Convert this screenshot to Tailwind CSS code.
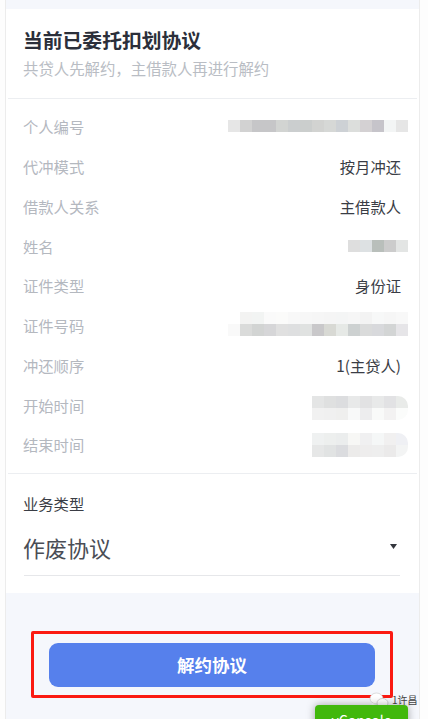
<!DOCTYPE html>
<html lang="zh-CN">
<head>
  <meta charset="UTF-8" />
  <title>当前已委托扣划协议</title>
  <meta name="viewport" content="width=device-width, initial-scale=1.0" />
  <script src="https://cdn.jsdelivr.net/npm/@tailwindcss/browser@4"></script>
</head>
<body class="bg-[#fdfdfd] font-['Noto_Sans_CJK_SC','Noto_Sans',sans-serif]">

<div class="relative h-[719px] w-[428px] overflow-hidden pl-[5px]">

  <!-- Page column -->
  <main class="h-full w-[415px] bg-[#f5f7fc] pt-[9px] border-x border-[#ececec]">

    <!-- Agreement card -->
    <section class="h-[584px] bg-white">
      <header class="mx-[2px] h-[90px] border-b border-[#eceef1] px-[15px] pt-[16px]">
        <h1 class="text-[19.8px] leading-[30px] font-bold text-[#2b2f3a]">当前已委托扣划协议</h1>
        <p class="text-[15.4px] leading-[26px] text-[#b9bdc4]">共贷人先解约，主借款人再进行解约</p>
      </header>

      <!-- Detail rows -->
      <div class="mx-[2px] h-[375px] border-b border-[#eceef1] pl-[15px] pr-[16px] pt-[8px] text-[15.3px] text-[#3a3d45]">
        <div class="flex h-[39.75px] items-center justify-between">
          <span class="text-[#b4b8bf]">个人编号</span>
          <div class="-mr-[7px] mb-[2px] flex flex-col">
            <div class="flex h-3">
              <i class="w-3 bg-[#e6e6e6]"></i><i class="w-3 bg-[#d2d2d2]"></i><i class="w-3 bg-[#c6c6c8]"></i><i class="w-3 bg-[#c6c6c8]"></i><i class="w-3 bg-[#d2d4d2]"></i><i class="w-3 bg-[#cbcecf]"></i><i class="w-3 bg-[#cbcecd]"></i><i class="w-3 bg-[#d2d3d1]"></i><i class="w-3 bg-[#d6d8d6]"></i><i class="w-3 bg-[#cdd1d5]"></i><i class="w-3 bg-[#dcdedc]"></i><i class="w-3 bg-[#d4d1d3]"></i><i class="w-3 bg-[#c6c4ca]"></i><i class="w-3 bg-[#f3f5f5]"></i><i class="w-3 bg-[#e6e6e6]"></i>
            </div>
          </div>
        </div>
        <div class="flex h-[39.75px] items-center justify-between">
          <span class="text-[#b4b8bf]">代冲模式</span><span>按月冲还</span>
        </div>
        <div class="flex h-[39.75px] items-center justify-between">
          <span class="text-[#b4b8bf]">借款人关系</span><span>主借款人</span>
        </div>
        <div class="flex h-[39.75px] items-center justify-between">
          <span class="text-[#b4b8bf]">姓名</span>
          <div class="-mr-[7px] flex h-3">
            <i class="w-3 bg-[#dedede]"></i><i class="w-3 bg-[#dde1e3]"></i><i class="w-3 bg-[#b9bfbb]"></i><i class="w-3 bg-[#cccccc]"></i><i class="w-3 bg-[#e3e5e4]"></i>
          </div>
        </div>
        <div class="flex h-[39.75px] items-center justify-between">
          <span class="text-[#b4b8bf]">证件类型</span><span>身份证</span>
        </div>
        <div class="flex h-[39.75px] items-center justify-between">
          <span class="text-[#b4b8bf]">证件号码</span>
          <div class="-mr-[7px] mb-[4px] flex flex-col items-end">
            <div class="flex h-3">
              <i class="w-3 bg-[#f3f3f2]"></i><i class="w-3 bg-[#f2f4f3]"></i><i class="w-3 bg-[#fafafa]"></i><i class="w-3 bg-[#fbfbfa]"></i><i class="w-3 bg-[#f8f8f8]"></i><i class="w-3 bg-[#f7f7f7]"></i><i class="w-3 bg-[#f6f6f6]"></i><i class="w-3 bg-[#f5f5f5]"></i><i class="w-3 bg-[#f4f5f5]"></i><i class="w-3 bg-[#f6f6f6]"></i><i class="w-3 bg-[#f3f3f3]"></i><i class="w-3 bg-[#f7f8f8]"></i><i class="w-3 bg-[#f6f6f6]"></i><i class="w-3 bg-[#f8f8f8]"></i>
            </div>
            <div class="flex h-3">
              <i class="w-3 bg-[#f9f9f9]"></i><i class="w-3 bg-[#dadbda]"></i><i class="w-3 bg-[#d2d4d3]"></i><i class="w-3 bg-[#d6d6d8]"></i><i class="w-3 bg-[#e0e0e0]"></i><i class="w-3 bg-[#dedfe0]"></i><i class="w-3 bg-[#e0e2e1]"></i><i class="w-3 bg-[#c9c8ca]"></i><i class="w-3 bg-[#d8d9d4]"></i><i class="w-3 bg-[#e6e9e6]"></i><i class="w-3 bg-[#cdd1d1]"></i><i class="w-3 bg-[#dadbdb]"></i><i class="w-3 bg-[#d8d9dc]"></i><i class="w-3 bg-[#d3d5d5]"></i><i class="w-3 bg-[#e6e5e8]"></i>
            </div>
          </div>
        </div>
        <div class="flex h-[39.75px] items-center justify-between">
          <span class="text-[#b4b8bf]">冲还顺序</span><span>1(主贷人)</span>
        </div>
        <div class="flex h-[39.75px] items-center justify-between">
          <span class="text-[#b4b8bf]">开始时间</span>
          <div class="-mr-[7px] mt-[6px] flex flex-col overflow-hidden rounded-r-[10px]">
            <div class="flex h-3">
              <i class="w-3 bg-[#e4e5e5]"></i><i class="w-3 bg-[#dfe0e0]"></i><i class="w-3 bg-[#dcdddf]"></i><i class="w-3 bg-[#e8e9e9]"></i><i class="w-3 bg-[#e2e2e3]"></i><i class="w-3 bg-[#e8e9e9]"></i><i class="w-3 bg-[#e2e2e4]"></i><i class="w-3 bg-[#e9ebe9]"></i>
            </div>
            <div class="flex h-3">
              <i class="w-3 bg-[#f1f1f1]"></i><i class="w-3 bg-[#f0f0f0]"></i><i class="w-3 bg-[#efefee]"></i><i class="w-3 bg-[#f8f9f9]"></i><i class="w-3 bg-[#ededee]"></i><i class="w-3 bg-[#f9faf9]"></i><i class="w-3 bg-[#f3f2f2]"></i><i class="w-3 bg-[#fbfcfb]"></i>
            </div>
          </div>
        </div>
        <div class="flex h-[39.75px] items-center justify-between">
          <span class="text-[#b4b8bf]">结束时间</span>
          <div class="-mr-[7px] flex flex-col overflow-hidden rounded-r-[10px]">
            <div class="flex h-3">
              <i class="w-3 bg-[#eff1f1]"></i><i class="w-3 bg-[#edefee]"></i><i class="w-3 bg-[#ebeded]"></i><i class="w-3 bg-[#f7f7f5]"></i><i class="w-3 bg-[#f0f0f1]"></i><i class="w-3 bg-[#f5f7f7]"></i><i class="w-3 bg-[#f1f0f0]"></i><i class="w-3 bg-[#eff0f4]"></i>
            </div>
            <div class="flex h-3">
              <i class="w-3 bg-[#e6e7e7]"></i><i class="w-3 bg-[#e1e3e3]"></i><i class="w-3 bg-[#dbdcdf]"></i><i class="w-3 bg-[#ecebea]"></i><i class="w-3 bg-[#eeeded]"></i><i class="w-3 bg-[#eeeeee]"></i><i class="w-3 bg-[#ebeaea]"></i><i class="w-3 bg-[#f3f4f4]"></i>
            </div>
          </div>
        </div>
      </div>

      <!-- Business type select -->
      <div class="pl-[18px] pr-[19px] pt-[18px]">
        <p class="-ml-[1px] text-[15.3px] leading-[22px] text-[#3a3d45]">业务类型</p>
        <div class="mt-[12px] flex h-[50px] items-center justify-between border-b border-[#e6e7ea] pb-[6px]">
          <span class="-ml-[1px] text-[22px] text-[#4a4d55]">作废协议</span>
          <svg class="mr-[3px] mb-[2px] h-[5px] w-[7px]" viewBox="0 0 7 5"><path d="M0 0h7L3.5 5z" fill="#33363d"/></svg>
        </div>
      </div>
    </section>

    <!-- Action -->
    <div class="px-[43px] pt-[50px]">
      <button class="h-[44px] w-[326px] rounded-[9px] bg-[#5680ec] text-[17.5px] font-bold text-white">解约协议</button>
    </div>
  </main>

  <!-- Red annotation around the button -->
  <div class="absolute left-[31px] top-[631px] h-[67px] w-[362px] rounded-[2px] border-[3px] border-[#fb1a12]"></div>

  <!-- Article watermark -->
  <div class="absolute left-[369px] top-[691px] flex items-center">
    <svg class="h-[17px] w-[20px]" viewBox="0 0 20 17">
      <ellipse cx="7.5" cy="6.5" rx="6.5" ry="5.5" fill="#fff" stroke="#bdbdbd" stroke-width=".5"/>
      <ellipse cx="13.5" cy="11" rx="5.5" ry="4.5" fill="#fff" stroke="#a8a8a8" stroke-width=".5"/>
      <path d="M3 11l-1 3 4-2zM16 14l2 2-.5-3z" fill="#fff"/>
    </svg>
    <span class="ml-[3px] text-[10px] leading-[18px] text-[#444]">1许昌</span>
  </div>

  <!-- vConsole switch -->
  <div class="absolute left-[315px] top-[705px] flex h-[34px] w-[93px] justify-center rounded-[4px] bg-[#41b80c] pt-[5px] text-[14px] leading-[20px] text-white shadow-[0_0_8px_rgba(0,0,0,0.35)]">vConsole</div>
</div>

</body>
</html>
